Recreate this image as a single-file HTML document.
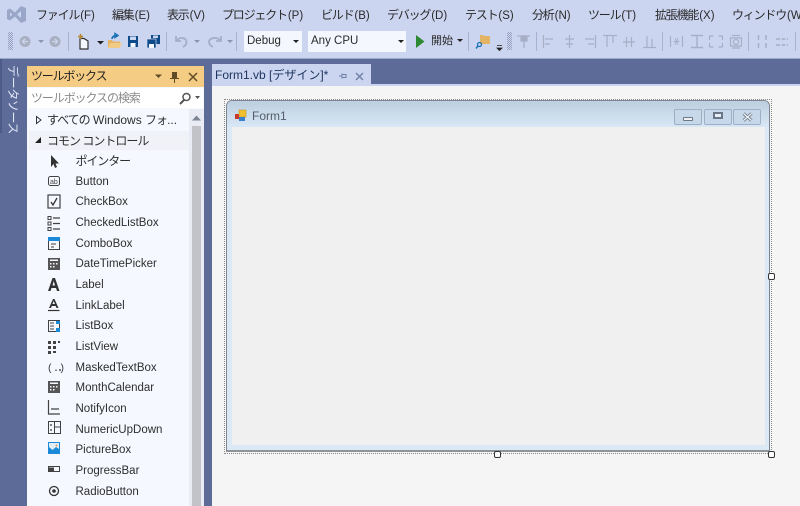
<!DOCTYPE html>
<html lang="ja"><head><meta charset="utf-8"><style>
html,body{margin:0;padding:0}
body{width:800px;height:506px;overflow:hidden;position:relative;background:#5d6b99;font-family:"Liberation Sans","Noto Sans CJK JP",sans-serif;font-size:12px;color:#1e1e1e}
.a{position:absolute}
.t{position:absolute;white-space:nowrap;line-height:16px}
svg{position:absolute;overflow:visible}
.m{top:7px;color:#2a2a2a;font-size:11.5px}
.m b{font-weight:normal;font-size:12px;letter-spacing:-1.2px;margin-right:1px}
.it{left:75.5px;color:#2e2e2e;font-size:11.5px}
.sep{position:absolute;top:32px;width:1px;height:19px;background:#a5b2d0}
.btn{position:absolute;top:109px;width:26px;height:14px;border:1px solid #9db0c6;border-radius:2px;background:#c7d8ea;box-sizing:content-box}
.grip{position:absolute;top:32px;width:5px;height:18px;background:repeating-conic-gradient(#98a3c2 0 25%,transparent 0 50%) 0 0/2px 2px}
</style></head><body>
<div class="a" style="left:0;top:0;width:800px;height:59px;background:#ccd5f0"></div>
<div class="a" style="left:0;top:58px;width:800px;height:1px;background:#9ba8cc"></div>
<svg style="left:7px;top:6px" width="19" height="17" viewBox="0 0 19 17"><path d="M0 4 3 2.500 8 6.500 14 0 19 2V15L14 17 8 10.500 3 14.500 0 13ZM3 6.500V10.500L5.500 8.500ZM14 5 10 8.500 14 12Z" fill="#9aa6c8" fill-rule="evenodd"/></svg>
<span class="t m" style="left:36px"><b>ファイル</b>(F)</span>
<span class="t m" style="left:112px"><b>編集</b>(E)</span>
<span class="t m" style="left:167px"><b>表示</b>(V)</span>
<span class="t m" style="left:222px"><b>プロジェクト</b>(P)</span>
<span class="t m" style="left:321px"><b>ビルド</b>(B)</span>
<span class="t m" style="left:387px"><b>デバッグ</b>(D)</span>
<span class="t m" style="left:465px"><b>テスト</b>(S)</span>
<span class="t m" style="left:532px"><b>分析</b>(N)</span>
<span class="t m" style="left:588px"><b>ツール</b>(T)</span>
<span class="t m" style="left:655px"><b>拡張機能</b>(X)</span>
<div class="a" style="left:732px;top:0;width:68px;height:30px;overflow:hidden"><span class="t m" style="left:0"><b>ウィンドウ</b>(W)</span></div>

<div class="grip" style="left:8px"></div>
<svg style="left:19px;top:35px" width="60" height="13" viewBox="0 0 60 13"><circle cx="6" cy="6.500" r="5.500" fill="#a9b0c2"/><path d="M9 6.500H4M6 4 3.500 6.500 6 9" stroke="#ccd5f0" stroke-width="1.300" fill="none"/><path d="M19 5h6l-3 3z" fill="#8d95ab"/><circle cx="36" cy="6.500" r="5.500" fill="#a9b0c2"/><path d="M33 6.500h5M36 4l2.500 2.500L36 9" stroke="#ccd5f0" stroke-width="1.300" fill="none"/></svg>
<div class="sep" style="left:68px"></div>
<svg style="left:76px;top:33px" width="40" height="18" viewBox="0 0 40 18"><path d="M4 5.500H8L12 8V16H4Z" fill="#f5f7ff" stroke="#333" stroke-width="1.200"/><path d="M2 3.500H7M4.500 1V6" stroke="#b8862b" stroke-width="1.500"/><path d="M21 8h7l-3.500 3.500z" fill="#222"/></svg>
<svg style="left:107px;top:33px" width="15" height="16" viewBox="0 0 15 16"><path d="M1 7H5L6 8.500H13V15H1Z" fill="#e2b463"/><path d="M3 10H14.500L13 15H1Z" fill="#f1cb85"/><path d="M5 6C5 3.500 7 2.500 9 2.500M8 .5 11 2.500 8 4.500Z" stroke="#1b73b8" stroke-width="1.500" fill="#1b73b8"/></svg>
<svg style="left:127px;top:35px" width="35" height="13" viewBox="0 0 35 13"><path d="M1 1H11V12H1Z" fill="#0c4a8a"/><path d="M3 1.500H9V5H3Z" fill="#ccd5f0"/><path d="M3.500 8H8.500V12H3.500Z" fill="#f5f7ff"/><path d="M24 0H33V9H24Z" fill="#0c4a8a"/><path d="M26 .5H31V3H26Z" fill="#ccd5f0"/><path d="M20 4H29V13H20Z" fill="#0c4a8a" stroke="#ccd5f0" stroke-width=".7"/><path d="M22 9H27V13H22Z" fill="#f5f7ff"/></svg>
<div class="sep" style="left:166px"></div>
<svg style="left:174px;top:35px" width="60" height="13" viewBox="0 0 60 13"><path d="M2 1V6H7M2.500 5.500C6 1.500 12.500 2.500 12.500 7 12.500 9.500 11 11 9 12" stroke="#a4aec8" stroke-width="1.800" fill="none"/><path d="M20 5h6l-3 3z" fill="#8d95ab"/><path d="M47 1V6H42M46.500 5.500C43 1.500 35 2.500 35 7 35 9.500 37 11 39 12" stroke="#a4aec8" stroke-width="1.800" fill="none"/><path d="M53 5h6l-3 3z" fill="#8d95ab"/></svg>
<div class="sep" style="left:236px"></div>

<div class="a" style="left:244px;top:31px;width:58px;height:21px;background:#f5f7ff"></div>
<span class="t" style="left:247px;top:33px;font-size:11.5px;color:#2a2a2a">Debug</span>
<svg style="left:293px;top:40px" width="6" height="4"><path d="M0 0h6L3 3z" fill="#222"/></svg>
<div class="a" style="left:308px;top:31px;width:98px;height:21px;background:#f5f7ff"></div>
<span class="t" style="left:311px;top:33px;font-size:11.5px;color:#2a2a2a">Any CPU</span>
<svg style="left:398px;top:40px" width="6" height="4"><path d="M0 0h6L3 3z" fill="#222"/></svg>
<svg style="left:416px;top:35px" width="9" height="13"><path d="M0 0 8.500 6.500 0 13Z" fill="#2d8a32"/></svg>
<span class="t" style="left:431px;top:33px;font-size:11px;color:#2a2a2a">開始</span>
<svg style="left:457px;top:39px" width="6" height="4"><path d="M0 0h6L3 3z" fill="#222"/></svg>
<div class="sep" style="left:468px"></div>
<svg style="left:476px;top:34px" width="30" height="17" viewBox="0 0 30 17"><path d="M4 1H7L8 2H14V10H4Z" fill="#e2b463"/><circle cx="3.500" cy="10.500" r="2" fill="none" stroke="#1b73b8" stroke-width="1.300"/><path d="M2 12 0 14.500" stroke="#1b73b8" stroke-width="1.500"/><path d="M21 11.500h5M21 14h5l-2.500 2.500z" stroke="#222" fill="#222" stroke-width=".8"/></svg>
<div class="grip" style="left:507px"></div>
<svg style="left:500px;top:25px" width="300" height="35" viewBox="0 0 300 35" fill="none" stroke="#a6afc6" stroke-width="1.200">
<path d="M17 11H30M24 10V23" stroke-width="1.300"/><path d="M21 12H27V16H21Z" fill="#a6afc6"/>
<path d="M43.500 10V23M45 14H53M45 19H50"/>
<path d="M65 14H74M66 19H73M69.500 10V23"/>
<path d="M95.500 10V23M85 14H94M88 19H94"/>
<path d="M103 10.500H117M107 11V22M113 11V18"/>
<path d="M123 17H135M126.500 12V22M131.500 12V22"/>
<path d="M143 22.500H156M147 11V22M152 14V22"/>
<path d="M170.500 11V22M182.500 11V22M173.500 16.500H179.500"/><path d="M175 13 178 20M178 13 175 20" stroke-width=".9"/>
<path d="M191 10.500H203M191 22.500H203M197 11V22" stroke-width="1.400"/>
<path d="M209.500 11H213.500M209.500 11V15M222.500 11H218.500M222.500 11V15M209.500 22H213.500M209.500 22V18M222.500 22H218.500M222.500 22V18"/>
<path d="M230.500 13H241.500V21H230.500ZM232 10.500H240M232 23H240"/><circle cx="236" cy="17" r="2.500"/>
<path d="M258.500 10V15M258.500 18V23M266 10V15M266 18V23" stroke-width="1.500"/>
<path d="M276 14H288M276 20H288" stroke-width="1.500" stroke-dasharray="4 1.500"/>
</svg>
<div class="sep" style="left:536px"></div><div class="sep" style="left:662px"></div><div class="sep" style="left:748px"></div><div class="sep" style="left:795px"></div>

<!-- auto hide tab -->
<div class="a" style="left:0;top:59px;width:2px;height:74px;background:#4d5b87"></div>
<span class="t" style="left:5px;top:65px;writing-mode:vertical-rl;text-orientation:sideways;color:#e0e6f5;font-size:12px;line-height:16px;letter-spacing:-.4px">データソース</span>

<!-- toolbox -->
<div class="a" style="left:27px;top:66px;width:177px;height:440px;background:#f6f8ff"></div>
<div class="a" style="left:27px;top:66px;width:177px;height:21px;background:#f5cc84"></div>
<span class="t" style="left:31px;top:68px;font-size:12px;color:#222;letter-spacing:-1.2px">ツールボックス</span>
<svg style="left:155px;top:71px" width="44" height="13" viewBox="0 0 44 13"><path d="M0 3.500h7L3.500 7z" fill="#5f4b24"/><path d="M17 1H22V7H24V8H20V12H19V8H15V7H17Z" fill="#5f4b24"/><path d="M34 2 42 10M42 2 34 10" stroke="#5f4b24" stroke-width="1.500"/></svg>
<div class="a" style="left:28px;top:88px;width:175px;height:20px;background:#fff"></div>
<span class="t" style="left:31px;top:90px;font-size:12px;color:#8a8a8a;letter-spacing:-1.1px">ツールボックスの検索</span>
<svg style="left:179px;top:92px" width="24" height="13" viewBox="0 0 24 13"><circle cx="7.500" cy="5" r="3.500" fill="none" stroke="#555" stroke-width="1.500"/><path d="M5 8 1 12" stroke="#555" stroke-width="2"/><path d="M16 4h5l-2.500 3z" fill="#555"/></svg>
<div class="a" style="left:29px;top:131px;width:160px;height:19px;background:#f0f2f8"></div>
<svg style="left:36px;top:116px" width="6" height="8"><path d="M.5.500 5 4 .5 7.500Z" fill="none" stroke="#333"/></svg>
<span class="t" style="left:47px;top:112px;font-size:12px;color:#2e2e2e"><span style="letter-spacing:-1px">すべての</span> Windows <span style="letter-spacing:-1px">フォ</span>...</span>
<svg style="left:35px;top:137px" width="7" height="7"><path d="M6 0V6H0Z" fill="#222"/></svg>
<span class="t" style="left:47px;top:133px;font-size:12px;color:#2e2e2e;letter-spacing:-1px">コモン コントロール</span>

<span class="t it" style="top:153px;font-size:12px;letter-spacing:-1.1px">ポインター</span>
<span class="t it" style="top:174px">Button</span>
<span class="t it" style="top:194px">CheckBox</span>
<span class="t it" style="top:215px">CheckedListBox</span>
<span class="t it" style="top:236px">ComboBox</span>
<span class="t it" style="top:256px">DateTimePicker</span>
<span class="t it" style="top:277px">Label</span>
<span class="t it" style="top:298px">LinkLabel</span>
<span class="t it" style="top:318px">ListBox</span>
<span class="t it" style="top:339px">ListView</span>
<span class="t it" style="top:360px">MaskedTextBox</span>
<span class="t it" style="top:380px">MonthCalendar</span>
<span class="t it" style="top:401px">NotifyIcon</span>
<span class="t it" style="top:422px">NumericUpDown</span>
<span class="t it" style="top:442px">PictureBox</span>
<span class="t it" style="top:463px">ProgressBar</span>
<span class="t it" style="top:484px">RadioButton</span>

<svg style="left:46px;top:152px" width="18" height="354" viewBox="0 0 18 354">
<path d="M5 3V15L7.500 12 9 16 11 15 9.500 11.500H13Z" fill="#333"/>
<rect x="2.500" y="24.500" width="11" height="9" rx="2" fill="none" stroke="#424242"/><text x="4" y="32" font-size="7" font-family="Liberation Sans" fill="#424242">ab</text>
<rect x="2" y="43" width="12" height="13" fill="none" stroke="#424242" stroke-width="1.200"/><path d="M5 50 7 53 11 46" fill="none" stroke="#333" stroke-width="1.300"/>
<path d="M2 64.500H5V67.500H2ZM2 70H5V73H2ZM2 75.500H5V78.500H2Z" fill="none" stroke="#424242"/><path d="M7 66H14M7 71.500H14M7 77H14" stroke="#424242" stroke-width="1.300"/>
<rect x="2.500" y="85.500" width="11" height="12" fill="none" stroke="#424242"/><rect x="2" y="85" width="12" height="4" fill="#1b8ad8"/><path d="M5 92H10M5 95H8" stroke="#424242"/>
<rect x="2" y="106" width="12" height="12" fill="#555"/><path d="M4 111H5.500V112.500H4ZM7 111H8.500V112.500H7ZM10 111H11.500V112.500H10ZM4 114H5.500V115.500H4ZM7 114H8.500V115.500H7Z" fill="#f6f8ff"/><path d="M4 107.500H12V109H4Z" fill="#f6f8ff"/>
<path d="M2 139 6.500 126H9L13.500 139H11L10 136H5.500L4.500 139ZM6.500 133.500H9L7.750 129Z" fill="#333" fill-rule="evenodd"/>
<path d="M3 156 7 147H8.500L12.500 156H10.500L9.700 154H5.800L5 156ZM6.500 152H9L7.700 149Z" fill="#333" fill-rule="evenodd"/><path d="M2 158.500H13.500" stroke="#333" stroke-width="1.200"/>
<rect x="2.500" y="168.500" width="11" height="11" fill="none" stroke="#424242"/><path d="M4 171H8M4 174H8M4 177H8" stroke="#424242"/><path d="M10 169H14V172H10ZM10 176H14V180H10Z" fill="#1b8ad8"/>
<path d="M2 189H5V192H2ZM7 189H10V192H7ZM12 189H14V191H12ZM2 194H5V197H2ZM7 194H10V197H7ZM2 199H5V202H2ZM7 199H10V201H7Z" fill="#424242"/>
<text x="1" y="219" font-size="10" font-family="Liberation Mono" fill="#333">(.)</text><path d="M13 218H15" stroke="#333" stroke-width="1.300"/>
<rect x="2" y="229" width="12" height="12" fill="#555"/><path d="M4 230.500H12V232H4ZM4 234H5.500V235.500H4ZM7 234H8.500V235.500H7ZM10 234H11.500V235.500H10ZM4 237H5.500V238.500H4ZM7 237H8.500V238.500H7Z" fill="#f6f8ff"/>
<path d="M2.500 248V262H14M5 257H13" fill="none" stroke="#424242" stroke-width="1.200"/>
<rect x="2.500" y="269.500" width="12" height="12" fill="none" stroke="#424242"/><path d="M8.500 269V282M9 275H15" stroke="#424242"/><path d="M5 272V274M5 277V279" stroke="#333" stroke-width="1.200"/>
<rect x="2" y="290" width="12" height="12" fill="#1b8ad8"/><path d="M3 291H13V297L10 295 6.500 298 3 295Z" fill="#e3eef8"/><circle cx="10.500" cy="293.500" r="1" fill="#e2963c"/>
<rect x="2.500" y="314.500" width="11" height="5" fill="none" stroke="#424242"/><path d="M3 315.500H8V319H3Z" fill="#424242"/>
<circle cx="8" cy="339" r="4.500" fill="none" stroke="#333" stroke-width="1.300"/><circle cx="8" cy="339" r="1.800" fill="#333"/>
</svg>

<div class="a" style="left:189px;top:109px;width:15px;height:397px;background:#e9ecf4"></div>
<div class="a" style="left:192px;top:126px;width:9px;height:380px;background:#c2c3c9"></div>
<svg style="left:192px;top:115px" width="9" height="6"><path d="M0 5.500 4.500 .5 9 5.500Z" fill="#7f8595"/></svg>

<!-- document -->
<div class="a" style="left:212px;top:85px;width:588px;height:421px;background:#f5f5f5"></div>
<div class="a" style="left:212px;top:84px;width:588px;height:2px;background:#ccd5f0"></div>
<div class="a" style="left:212px;top:64px;width:159px;height:21px;background:#ccd5f0"></div>
<span class="t" style="left:215px;top:67px;font-size:12px;color:#1d3560">Form1.vb [デザイン]*</span>
<svg style="left:338px;top:72px" width="26" height="9" viewBox="0 0 26 9"><path d="M1 4H4M4 1.500V6.500M4.500 2.500H8V5.500H4.500" fill="none" stroke="#6f7fa6"/><path d="M18 1 25 8M25 1 18 8" stroke="#6f7fa6" stroke-width="1.400"/></svg>

<!-- selection -->
<div class="a" style="left:224px;top:99px;width:546px;height:353px;border:1px dotted #8a8a8a;box-sizing:content-box"></div>
<!-- form -->
<div class="a" style="left:226px;top:100px;width:544px;height:352px;border-radius:6px 6px 0 0;background:#dbe8f6;border:1px solid #7d8590;border-bottom:2px solid #8f9499;box-sizing:border-box"></div>
<div class="a" style="left:227px;top:101px;width:542px;height:26px;border-radius:5px 5px 0 0;background:linear-gradient(#bccfdf,#d9e7f5)"></div>
<div class="a" style="left:232px;top:127px;width:533px;height:318px;background:#f0f0f0"></div>
<svg style="left:235px;top:110px" width="12" height="12" viewBox="0 0 12 12"><rect x="4" y="0" width="7" height="7" fill="#f0c030" stroke="#c99a20" stroke-width=".6"/><rect x="0" y="4" width="4" height="5" fill="#c8392b"/><rect x="4" y="7" width="6" height="4" fill="#3a7fd0"/></svg>
<span class="t" style="left:252px;top:108px;font-size:12px;color:#555e68">Form1</span>
<div class="btn" style="left:674px"></div>
<div class="btn" style="left:704px"></div>
<div class="btn" style="left:733px"></div>
<div class="a" style="left:683px;top:117px;width:10px;height:4px;background:#eef2f7;border:1px solid #6b7786;box-sizing:border-box;border-radius:1px"></div>
<div class="a" style="left:713px;top:112px;width:10px;height:7px;border:2px solid #6b7786;box-sizing:border-box;background:#e8eef5"></div>
<svg style="left:742px;top:112px" width="11" height="10"><path d="M1.500 1.500 9.500 8.500M9.500 1.500 1.500 8.500" stroke="#6b7786" stroke-width="3"/><path d="M1.500 1.500 9.500 8.500M9.500 1.500 1.500 8.500" stroke="#f0f4f8" stroke-width="1.300"/></svg>
<div class="a" style="left:768px;top:273px;width:5px;height:5px;background:#fff;border:1px solid #333;border-radius:2px"></div>
<div class="a" style="left:494px;top:451px;width:5px;height:5px;background:#fff;border:1px solid #333;border-radius:2px"></div>
<div class="a" style="left:768px;top:451px;width:5px;height:5px;background:#fff;border:1px solid #333;border-radius:2px"></div>
</body></html>
